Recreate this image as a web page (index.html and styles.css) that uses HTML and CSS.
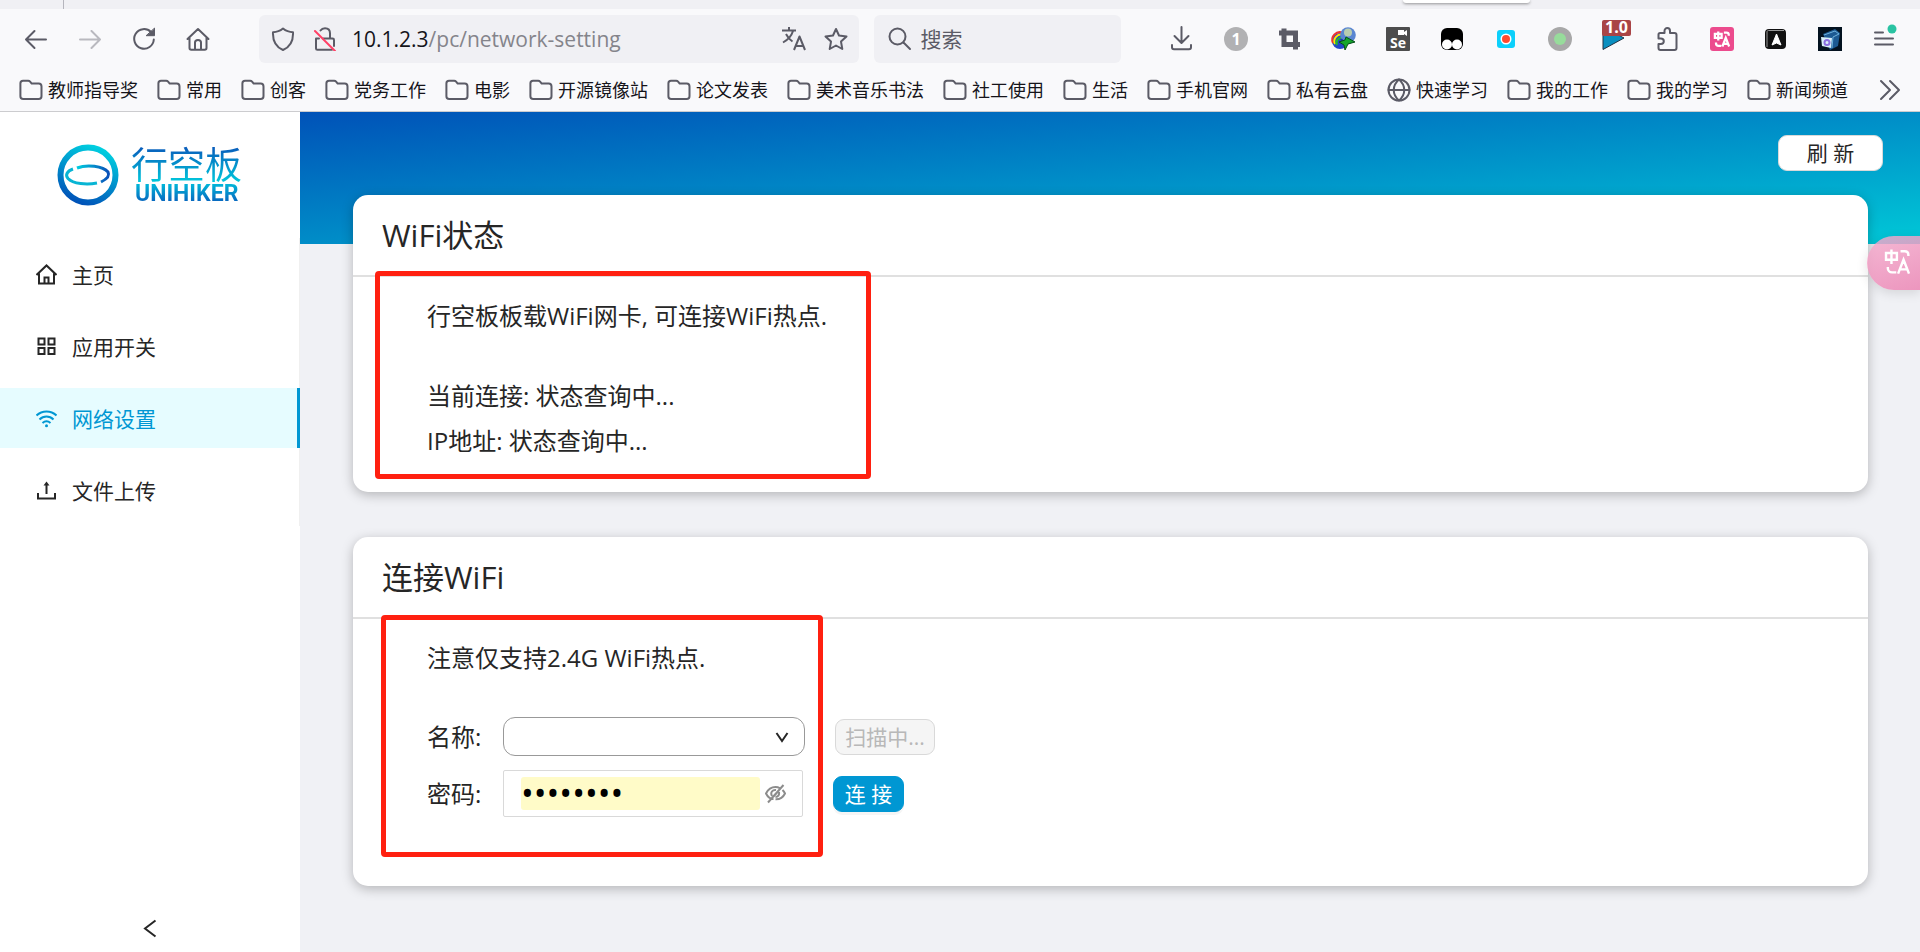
FILE: index.html
```
<!DOCTYPE html>
<html lang="zh-CN">
<head>
<meta charset="utf-8">
<title>行空板 UNIHIKER</title>
<link rel="stylesheet" href="styles.css">
</head>
<body>
<svg class="defs" aria-hidden="true">
  <symbol id="folder" viewBox="0 0 24 24"><path d="M4 2.800h5.200c.8 0 1.400.3 1.900.9l1.600 1.900h7c1.600 0 2.800 1.200 2.800 2.800v9.800c0 1.600-1.200 2.800-2.800 2.800H4.200c-1.600 0-2.800-1.200-2.800-2.800V5.400c0-1.500 1.100-2.600 2.600-2.600z"/></symbol>
  <symbol id="trans" viewBox="0 0 24 24"><path d="M2.500 5h9v5.500h-9zM7 2v12M14.500 3.500h3.500c2 0 3 1 3 3v1M4 16.500v1c0 2 1.500 3.500 3.500 3.500H11M12.500 22l4.500-11.500L21.500 22M14 18.500h6"/></symbol>
  <linearGradient id="ring" x1="0.3" y1="1" x2="0.7" y2="0"><stop offset="0" stop-color="#0052b8"/><stop offset="1" stop-color="#00cfe0"/></linearGradient>
  <linearGradient id="orbit" x1="0" y1="0" x2="1" y2="0"><stop offset="0" stop-color="#00cfe0"/><stop offset="1" stop-color="#0a50b8"/></linearGradient>
</svg>

<header class="browser">
  <div class="tabstrip"><span class="tab-sep"></span><span class="tab-tip"></span></div>
  <div class="navbar">
    <div class="navbuttons">
      <button aria-label="后退"><svg class="i" viewBox="0 0 24 24"><path d="M22 12.500H2M10.500 4L2 12.500l8.500 8.500"/></svg></button>
      <button aria-label="前进" class="off"><svg class="i" viewBox="0 0 24 24"><path d="M2 12.500h20M13.500 4l8.500 8.500-8.500 8.500"/></svg></button>
      <button aria-label="刷新页面"><svg class="i" viewBox="0 0 24 24"><path d="M19 5A9.800 9.800 0 1 0 21.800 12.500"/><path class="solid" d="M22.500 1.500v7.200h-8z"/></svg></button>
      <button aria-label="主页"><svg class="i" viewBox="0 0 24 24"><path d="M1.500 12L12 2l10.500 10M3.500 10.500V21a1.800 1.800 0 0 0 1.800 1.800h13.400a1.800 1.800 0 0 0 1.800-1.800V10.500M9 22v-6.500c0-1.500 1-2.500 3-2.500s3 1 3 2.500V22"/></svg></button>
    </div>
    <div class="urlbar">
      <svg class="i" viewBox="0 0 24 24"><path d="M12 1.500c3 2.500 6.500 3.600 10 3.700.4 8-2.500 14.500-10 17.800C4.500 19.700 1.600 13.200 2 5.200c3.500-.1 7-1.200 10-3.700z"/></svg>
      <svg class="i" viewBox="0 0 24 24"><path d="M7.500 3.500C8.500 2 10 1.200 12 1.200c3 0 5 2 5 5V11M3 12v9.500c0 .8.7 1.300 1.400 1.300H19M10 11.500h9.500c.8 0 1.500.6 1.500 1.400V19M3 11.500h3"/><path class="slash" d="M2 4l20 20"/></svg>
      <div class="url" role="textbox" aria-label="网址"><b>10.1.2.3</b>/pc/network-setting</div>
      <svg class="i" viewBox="0 0 24 24"><path class="thick" d="M0 3.500h14M7 0v3.500M11 4C9.500 9 5.500 13 1 15.500M4 7c1.500 3 4 6 6.500 7.500M12 23l5.500-13.500L23 23M13.500 19h8"/></svg>
      <svg class="i star" viewBox="0 0 24 24"><path d="M12 2l3 6.500 7.500 1-5.500 5.100 1.300 7.400L12 18.500 5.700 22 7 14.600 1.500 9.500l7.500-1z"/></svg>
    </div>
    <div class="searchbar">
      <svg class="i" viewBox="0 0 24 24"><circle cx="9.500" cy="9.500" r="8"/><path d="M15.500 15.500L22 22"/></svg>
      <input type="text" aria-label="搜索" placeholder="搜索">
    </div>
    <div class="tools">
      <button aria-label="下载"><svg class="i" viewBox="0 0 24 24"><path d="M11.500 0v15.500M4.500 9l7 7 7-7M2 18v2.200c0 1.300.8 2 2 2h15c1.200 0 2-.7 2-2V18"/></svg></button>
      <button class="one" aria-label="计数"><span>1</span></button>
      <button aria-label="截图"><svg class="i" viewBox="0 0 24 24"><path class="heavy" d="M6 1.500v16h16M1 6h16.500v16.500"/></svg></button>
      <button aria-label="下载器"><svg viewBox="0 0 24 24"><circle cx="8" cy="14" r="8" fill="#2447c8"/><path d="M1 16A7.500 7.500 0 0 1 11 6" fill="none" stroke="#e33" stroke-width="2"/><path d="M3 17a6.500 6.500 0 0 1 8-9" fill="none" stroke="#ffe600" stroke-width="2"/><path d="M5 18a5 5 0 0 1 6-7" fill="none" stroke="#22b930" stroke-width="2"/><circle cx="16" cy="8" r="7.800" fill="#5a86d2"/><circle cx="16" cy="5.500" r="4" fill="#b9cdb0"/><path d="M9 12a8 8 0 0 0 12 2" fill="none" stroke="#1c3f9c" stroke-width="2"/><path d="M7 15l6-2 1-3 9 5-7 2-3 6-1-5z" fill="#16a62c" stroke="#06501a" stroke-width="1"/></svg></button>
      <button class="se" aria-label="Selenium"><span>Se</span><svg viewBox="0 0 10 6"><path d="M0 0h6v2l3-2v6L6 4v1H0z" fill="#fff"/></svg></button>
      <button aria-label="脚本"><svg viewBox="0 0 24 24"><rect x="1" y="1" width="22" height="22" rx="6"/><circle cx="7" cy="17.500" r="5" fill="#fff"/><circle cx="17" cy="17.500" r="5" fill="#fff"/></svg></button>
      <button aria-label="录制"><svg viewBox="0 0 24 24"><rect x="3" y="3" width="18" height="18" rx="3" fill="#0cd0fb"/><circle cx="12" cy="12" r="5.500" fill="#fff"/><circle cx="12" cy="12" r="4" fill="#ff4a2f"/></svg></button>
      <button aria-label="状态"><svg viewBox="0 0 24 24"><circle cx="12" cy="12" r="12" fill="#a8a8a8"/><circle cx="12" cy="12" r="6" fill="#97dc9b"/></svg></button>
      <button class="speed" aria-label="播放速度"><svg viewBox="0 0 24 24"><path d="M1 0l21 11L1 22.500z" fill="#0a8fc0" stroke="#234" stroke-width="1"/></svg><span>1.0</span></button>
      <button aria-label="扩展"><svg class="i" viewBox="0 0 24 24"><path d="M2.500 7.500c0-1 .6-1.600 1.600-1.600H8.500V4c0-1.800 1.200-3 2.800-3S14 2.200 14 4v1.900h4.500c1.200 0 2 .8 2 2V21c0 1.200-.8 2-2 2H4.500c-1.200 0-2-.8-2-2v-4h2.300c1.800 0 3-1.100 3-2.700s-1.200-2.700-3-2.700H2.500z"/></svg></button>
      <button aria-label="翻译" class="pink"><svg viewBox="0 0 24 24"><use href="#trans"/></svg></button>
      <button aria-label="助手"><svg viewBox="0 0 24 24"><rect x="1" y="2" width="21" height="20" rx="4" fill="#111"/><path d="M3 20V5c0-1 .5-1.500 1.500-1.500H20" fill="none" stroke="#999" stroke-width="1"/><path d="M12.500 7L17 18l-4.500-2L8 18z" fill="#fff" stroke="#fff" stroke-linejoin="round"/></svg></button>
      <button aria-label="立方体"><svg viewBox="0 0 24 24"><path d="M0 0h24v24H0z" fill="#04121f"/><path d="M5 7l12-5 5 4-2 13-8 4z" fill="#1d5a92"/><path d="M6 8l11-4 4 3M15 10l6-3M15 10l-1 11" fill="none" stroke="#6fb2dd"/><path d="M3 10l11 1-1 10-9-2z" fill="#d9f0fa"/><circle cx="9" cy="15.500" r="2.500" fill="none" stroke="#8b6fe0" stroke-width="2"/></svg></button>
      <button aria-label="菜单" class="menubtn"><svg class="i" viewBox="0 0 24 24"><path d="M3 5.500h8M3 11.500h18M3 17.500h18"/><circle class="dot" cx="20" cy="2" r="4.500"/></svg></button>
    </div>
  </div>
  <nav class="bookmarks" aria-label="书签">
    <a href="#"><svg class="i"><use href="#folder"/></svg>教师指导奖</a>
    <a href="#"><svg class="i"><use href="#folder"/></svg>常用</a>
    <a href="#"><svg class="i"><use href="#folder"/></svg>创客</a>
    <a href="#"><svg class="i"><use href="#folder"/></svg>党务工作</a>
    <a href="#"><svg class="i"><use href="#folder"/></svg>电影</a>
    <a href="#"><svg class="i"><use href="#folder"/></svg>开源镜像站</a>
    <a href="#"><svg class="i"><use href="#folder"/></svg>论文发表</a>
    <a href="#"><svg class="i"><use href="#folder"/></svg>美术音乐书法</a>
    <a href="#"><svg class="i"><use href="#folder"/></svg>社工使用</a>
    <a href="#"><svg class="i"><use href="#folder"/></svg>生活</a>
    <a href="#"><svg class="i"><use href="#folder"/></svg>手机官网</a>
    <a href="#"><svg class="i"><use href="#folder"/></svg>私有云盘</a>
    <a href="#"><svg class="i" viewBox="0 0 24 24"><circle cx="12" cy="12" r="10.500"/><path d="M1.500 12h21M12 1.500c-7 6-7 15 0 21M12 1.500c7 6 7 15 0 21"/></svg>快速学习</a>
    <a href="#"><svg class="i"><use href="#folder"/></svg>我的工作</a>
    <a href="#"><svg class="i"><use href="#folder"/></svg>我的学习</a>
    <a href="#"><svg class="i"><use href="#folder"/></svg>新闻频道</a>
    <button class="more" aria-label="更多书签"><svg class="i" viewBox="0 0 24 24"><path d="M3 3l9 9-9 9M12 3l9 9-9 9"/></svg></button>
  </nav>
</header>

<div class="app">
  <aside class="sidebar">
    <div class="logo">
      <svg viewBox="0 0 62 62"><circle cx="31" cy="31" r="27.500" fill="none" stroke="url(#ring)" stroke-width="6"/><path d="M16 25C10 27 8 31 11 34.500 16 40 30 41 40 39" fill="none" stroke="#08b5d4" stroke-width="3"/><path d="M20 24c10-4 26-2 31 4 2 4-1 7-7 10" fill="none" stroke="url(#orbit)" stroke-width="3"/></svg>
      <div class="brand"><span class="brand-cn">行空板</span><span class="brand-en">UNIHIKER</span></div>
    </div>
    <nav class="menu">
      <a href="#"><svg viewBox="0 0 21 21"><path d="M0.500 11L10.500 1.500l10 9.500M3 9.500v10h15v-10M8.500 19v-5.500h4V19"/></svg>主页</a>
      <a href="#"><svg viewBox="0 0 21 21"><path d="M2.500 2.500h6v6h-6zM12.500 2.500h6v6h-6zM2.500 12h6v6h-6zM12.500 12h6v6h-6z"/></svg>应用开关</a>
      <a href="#" class="active" aria-current="page"><svg viewBox="0 0 21 21"><path d="M.5 7.500C6 2 15 2 20.500 7.500M3.500 11.500c4-4 10-4 14 0M6.500 15c2.500-2.200 5.500-2.200 8 0"/><circle cx="10.500" cy="17.800" r="1.500" class="wdot"/></svg>网络设置</a>
      <a href="#"><svg viewBox="0 0 21 21"><path d="M2 13v5.500h17V13M10.500 14V4"/><path class="wdot" d="M10.500 1.500l3 4h-6z"/></svg>文件上传</a>
    </nav>
    <button class="collapse" aria-label="收起"><svg viewBox="0 0 21 21"><path d="M15.500 2.500L5 10.500l10.500 8"/></svg></button>
  </aside>

  <main class="main">
    <div class="banner"><button class="btn refresh">刷 新</button></div>
    <div class="cards">
      <section class="card">
        <h2>WiFi状态</h2>
        <div class="body status">
          <p class="lead">行空板板载WiFi网卡, 可连接WiFi热点.</p>
          <p>当前连接: 状态查询中...</p>
          <p>IP地址: 状态查询中...</p>
        </div>
        <div class="mark mark-status"></div>
      </section>
      <section class="card">
        <h2>连接WiFi</h2>
        <form class="body connect">
          <p class="lead">注意仅支持2.4G WiFi热点.</p>
          <div class="row">
            <label for="ssid">名称:</label>
            <div class="select"><select id="ssid"><option></option></select><svg viewBox="0 0 14 14"><path d="M1.500 3L7 11l5.500-8"/></svg></div>
            <button class="btn scan" type="button" disabled>扫描中...</button>
          </div>
          <div class="row pass">
            <label for="pwd">密码:</label>
            <div class="password"><input id="pwd" type="password" value="12345678"><button type="button" aria-label="显示密码"><svg viewBox="0 0 21 21"><path d="M8.500 16C5 16 2.500 13.500 1 10.500 3 6.500 6.500 4 10.500 4c1.500 0 3 .3 4 1M17.500 7c1 1 1.800 2 2.500 3.500-2 4-5.500 6-9.500 5.800M7 13c-2-3.500.5-6.500 4-6M14 9c.5 3-1 5-3.500 5M3 19.500L18.500 2M8.500 13.500l4.500-5"/></svg></button></div>
            <button class="btn join" type="button">连 接</button>
          </div>
        </form>
        <div class="mark mark-connect"></div>
      </section>
    </div>
    <button class="float" aria-label="翻译页面"><svg viewBox="0 0 24 24"><use href="#trans"/></svg></button>
  </main>
</div>
</body>
</html>
```
FILE: styles.css
```
* { box-sizing: border-box; }
body {
  margin: 0;
  min-height: 100vh;
  display: flex;
  flex-direction: column;
  font-family: "Open Sans", "Noto Sans CJK SC", sans-serif;
  font-size: 21px;
  color: #262626;
  background: #f0f1f5;
}
button, input, select { font: inherit; color: inherit; }
button { border: 0; padding: 0; background: none; display: flex; align-items: center; justify-content: center; }
a { color: inherit; text-decoration: none; }
h2, p { margin: 0; font-weight: 400; }
svg { display: block; flex: none; }
.defs { position: absolute; width: 0; height: 0; }

.browser { background: #f9f9fb; border-bottom: 1px solid #cccccf; }
.i { width: 24px; height: 24px; fill: none; stroke: #5b5b66; stroke-width: 2; stroke-linecap: round; stroke-linejoin: round; }
.i .solid { fill: #5b5b66; stroke-width: 1; }
.i .slash { stroke: #ff4066; }
.i .thick { stroke-width: 2; stroke-linecap: butt; }
.i .heavy { stroke-width: 5; stroke-linecap: butt; stroke-linejoin: miter; }
.i .dot { fill: #2ac3a2; stroke: none; }
.tabstrip { height: 9px; background: #f0f0f4; position: relative; }
.tab-sep { position: absolute; left: 63px; top: 0; width: 1px; height: 9px; background: #b5b5bd; }
.tab-tip { position: absolute; left: 1403px; top: 0; width: 127px; height: 3px; background: #fff; border-radius: 0 0 4px 4px; box-shadow: 0 1px 3px rgba(0,0,0,.4); }
.navbar { height: 60px; display: flex; align-items: center; padding-right: 9px; }
.navbuttons { display: flex; width: 259px; padding-left: 9px; }
.navbuttons button { width: 54px; height: 48px; }
.off { opacity: .4; }
.urlbar, .searchbar { height: 48px; background: #f0f0f4; border-radius: 6px; display: flex; align-items: center; }
.urlbar { flex: 606; gap: 18px; padding: 0 11px 0 12px; }
.url { flex: 1; color: #84848b; font-size: 21px; margin-left: -3px; white-space: nowrap; }
.url b { font-weight: 400; color: #15141a; }
.searchbar { flex: 244; margin-left: 15px; padding-left: 14px; gap: 8px; min-width: 0; }
.searchbar input { flex: 1; min-width: 0; border: 0; background: none; padding: 0; }
.searchbar input::placeholder { color: #5b5b66; opacity: 1; }
.tools { display: flex; margin-left: 34px; }
.tools button { width: 54px; height: 48px; position: relative; }
.tools svg { width: 24px; height: 24px; overflow: visible; }
.one span { width: 24px; height: 24px; border-radius: 12px; background: #b1b1b3; color: #fff; font-size: 16px; line-height: 24px; font-weight: 700; }
.se span { width: 24px; height: 24px; background: #4d4d4d; color: #fff; font-size: 14px; line-height: 16px; padding-top: 8px; font-weight: 700; border-radius: 1px; }
.tools .se svg { position: absolute; width: 10px; height: 6px; left: 27px; top: 15px; }
.speed span { position: absolute; left: 15px; top: 5px; width: 29px; height: 16px; border-radius: 2px; background: #a94446; color: #fff; font-size: 16px; line-height: 15px; font-weight: 700; }
.pink svg { background: #ec4b8d; border-radius: 3px; padding: 3px; fill: none; stroke: #fff; stroke-width: 3; }
.bookmarks { height: 42px; display: flex; align-items: center; gap: 19px; padding-left: 19px; font-size: 18px; color: #15141a; overflow: hidden; }
.bookmarks a { display: flex; align-items: center; gap: 5px; white-space: nowrap; line-height: 26px; }
.more { margin-left: auto; margin-right: 18px; }

.app { flex: 1; display: flex; }
.sidebar { width: 300px; flex: none; background: #fff; display: flex; flex-direction: column; }
.logo { height: 126px; padding-left: 57px; display: flex; align-items: center; gap: 12px; }
.logo svg { width: 62px; height: 62px; }
.brand { display: flex; flex-direction: column; }
.brand span { color: transparent; background: linear-gradient(#0a52b8, #00c8dc) text; -webkit-background-clip: text; }
.brand-cn { font: 400 37px/38px "Noto Sans CJK SC", sans-serif; }
.brand .brand-en { font: 700 23px/24px Roboto, sans-serif; padding-left: 4px; background-image: linear-gradient(#00c0dc, #0a52b8); }
.menu { display: flex; flex-direction: column; gap: 12px; padding: 6px 0; border-right: 1px solid #f0f0f0; }
.menu a { height: 60px; display: flex; align-items: center; gap: 15px; padding-left: 36px; }
.menu svg, .collapse svg { width: 21px; height: 21px; fill: none; stroke: currentColor; stroke-width: 2; }
.menu .wdot { fill: currentColor; stroke: none; }
.menu .active { margin-right: -1px; background: #e6fcff; color: #0097d3; border-right: 3px solid #0097d3; }
.collapse { margin-top: auto; height: 48px; }

.main { flex: 1; position: relative; min-width: 0; }
.banner { height: 132px; background: linear-gradient(to bottom right, #0052b8, #00c8d7); padding: 23px 37px 0 0; display: flex; justify-content: flex-end; align-items: flex-start; }
.btn { height: 36px; border-radius: 9px; border: 1px solid #d9d9d9; line-height: 34px; white-space: nowrap; }
.refresh { width: 105px; background: #fff; }
.cards { margin: -49px 52px 0 53px; padding-bottom: 66px; display: flex; flex-direction: column; gap: 45px; }
.card { background: #fff; border-radius: 15px; box-shadow: 0 3px 12px rgba(0,0,0,.25); position: relative; }
h2 { font-size: 31px; line-height: 40px; padding: 20px 29px; border-bottom: 2px solid #e0e0e0; }
.body { padding: 16px 74px 0; font-size: 24px; line-height: 45px; }
.lead { margin-bottom: 35px; }
.status { padding-bottom: 29px; }
.connect { padding-bottom: 69px; }
.connect .lead { margin-bottom: 37px; }
.row { display: flex; align-items: center; height: 39px; }
.pass { margin-top: 14px; height: 47px; }
.row label { width: 76px; }
.select { position: relative; width: 302px; height: 39px; }
.select select { appearance: none; width: 100%; height: 100%; border: 1px solid #999; border-radius: 12px; background: #fff; padding: 0 12px; }
.select svg { position: absolute; right: 16px; top: 13px; width: 14px; height: 14px; fill: none; stroke: #262626; stroke-width: 2; pointer-events: none; }
.scan { width: 100px; margin-left: 30px; font-size: 21px; color: #b8b8b8; background: #f5f5f5; }
.password { width: 300px; height: 47px; border: 1px solid #d9d9d9; border-radius: 2px; display: flex; align-items: center; justify-content: space-between; padding: 0 16px 0 17px; }
.password input { width: 239px; height: 33px; border: 0; border-radius: 3px; background: #fffbc8; padding: 0; color: #000; font-size: 34px; }
.password svg { width: 21px; height: 21px; fill: none; stroke: #8c8c8c; stroke-width: 2; }
.join { width: 71px; margin-left: 30px; font-size: 21px; background: #0097d3; color: #fff; border-color: #0097d3; box-shadow: 0 3px 0 rgba(0,0,0,.04); }
.mark { position: absolute; border: 5px solid #ff2010; border-radius: 4px; pointer-events: none; }
.mark-status { left: 22px; top: 76px; width: 496px; height: 208px; }
.mark-connect { left: 28px; top: 78px; width: 442px; height: 242px; }
.float { position: absolute; right: 0; top: 124px; width: 53px; height: 54px; border-radius: 27px 0 0 27px; background: linear-gradient(160deg, rgba(246,170,204,.8), rgba(236,140,184,.9)); box-shadow: 0 3px 12px rgba(0,0,0,.12); padding: 0 0 4px 8px; }
.float svg { width: 29px; height: 29px; fill: none; stroke: #fff; stroke-width: 2; }
```
